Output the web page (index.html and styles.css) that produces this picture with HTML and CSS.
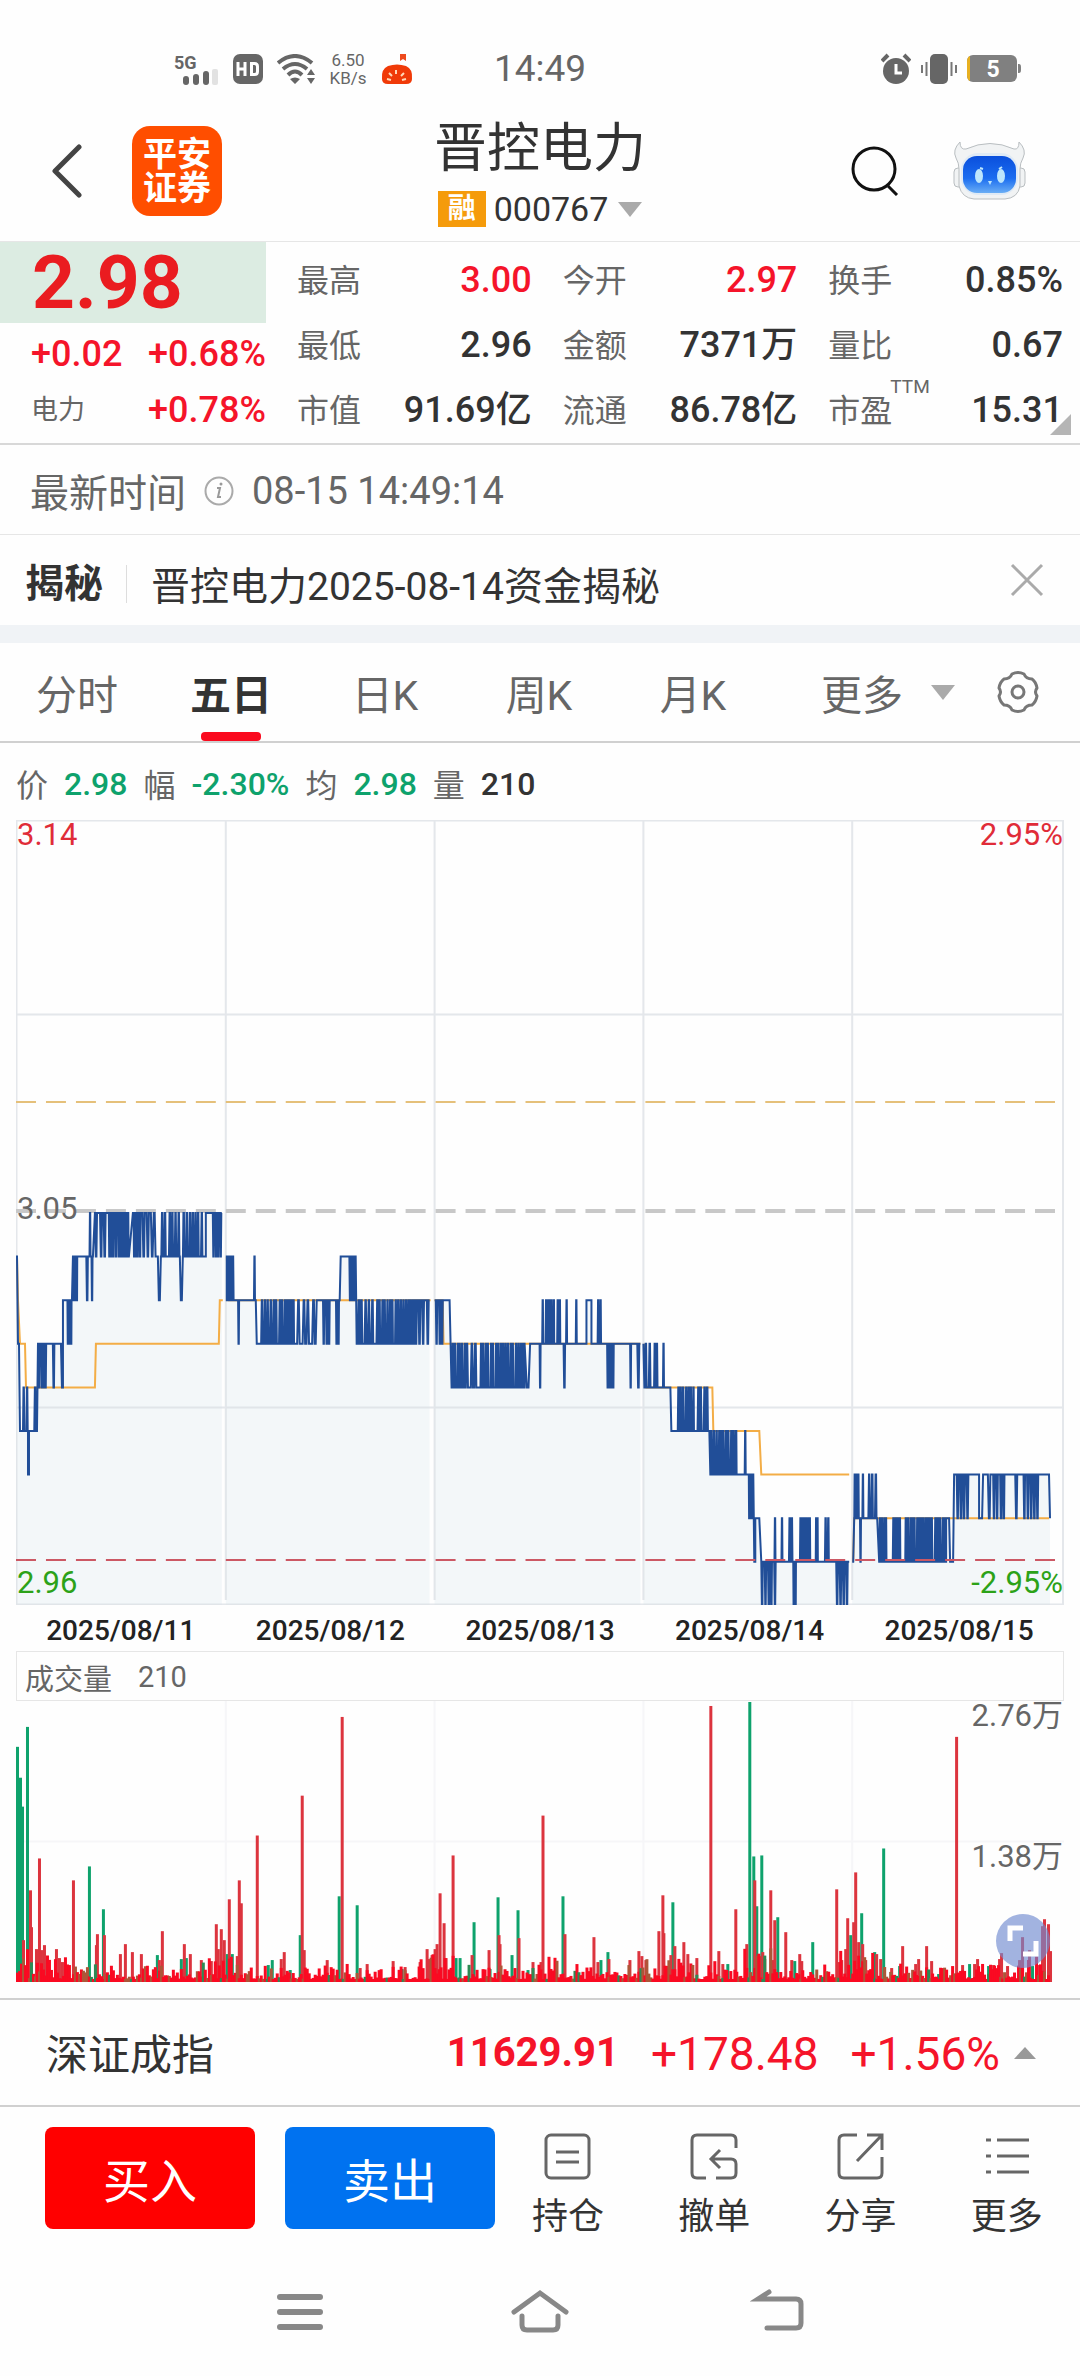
FILE: index.html
```html
<!DOCTYPE html>
<html lang="zh-CN">
<head>
<meta charset="utf-8">
<meta name="viewport" content="width=device-width, initial-scale=1">
<title>晋控电力 000767</title>
<link rel="stylesheet" href="styles.css">
</head>
<body>
<div class="status">
  <div class="status-left">
    <div class="signal"><span class="net">5G</span>
    <svg width="36" height="16" viewBox="0 0 36 16"><g fill="#666"><rect y="7" width="6" height="9" rx="3"/><rect x="10" y="5" width="6" height="11" rx="3"/><rect x="20" y="2" width="6" height="14" rx="3"/></g><rect x="29" width="6" height="16" rx="2" fill="#e2e2e2"/></svg></div>
    <svg width="30" height="30" viewBox="0 0 30 30"><rect width="30" height="30" rx="7" fill="#666"/><path d="M5 8v14M12 8v14M5 15h7M18.500 9.500h3q3 0 3 3v5q0 3-3 3h-3z" fill="none" stroke="#fff" stroke-width="3"/></svg>
    <svg width="38" height="30" viewBox="0 0 38 30"><g fill="none" stroke="#666" stroke-width="4"><path d="M1 9q17-14 34 0"/><path d="M6 15q12-10 24 0"/><path d="M11 21q7-7 14 0"/></g><path d="M13 25q5-3 10 0l-5 5zM30 21l4-6 4 6zM30 24h8l-4 6z" fill="#666"/></svg>
    <div class="speed"><span>6.50</span><span>KB/s</span></div>
    <svg width="32" height="30" viewBox="0 0 32 30"><path d="M19 0h6v7l-3-2-3 2z" fill="#ee4a1d"/><path d="M7 12q9-3 18 0 7 3 6 13 0 5-6 5H7q-6 0-6-5Q0 15 7 12z" fill="#f03a08"/><path d="M6 25l4 1M8 19l3 3M15 16v4M23 19l-3 3M25 25l-4 1" stroke="#ffd9b8" stroke-width="2"/></svg>
  </div>
  <time class="clock">14:49</time>
  <div class="status-right">
    <svg width="30" height="32" viewBox="0 0 30 32"><circle cx="15" cy="18" r="13" fill="#666"/><path d="M1 8l6-6M29 8l-6-6" stroke="#666" stroke-width="4"/><path d="M15 11v9h6" fill="none" stroke="#fff" stroke-width="3"/></svg>
    <svg width="36" height="30" viewBox="0 0 36 30"><rect x="9" width="18" height="30" rx="5" fill="#666"/><path d="M1 11v8M5.500 8v14M30.500 8v14M35 11v8" stroke="#777" stroke-width="2"/></svg>
    <svg width="54" height="28" viewBox="0 0 54 28"><rect width="50" height="27" rx="6" fill="#808080"/><path d="M3 1v25q-3-1-3-6V7q0-5 3-6z" fill="#e8b020"/><path d="M51 9h1q2 0 2 3v3q0 3-2 3h-1z" fill="#808080"/><text x="26" y="22" text-anchor="middle" class="battery">5</text></svg>
  </div>
</div>

<header class="header">
  <div class="header-left">
    <button class="icon-btn" aria-label="返回"><svg width="30" height="54" viewBox="0 0 30 54"><path d="M27 3L3 27l24 24" fill="none" stroke="#444" stroke-width="5" stroke-linecap="round" stroke-linejoin="round"/></svg></button>
    <div class="brand"><span>平安</span><span>证券</span></div>
  </div>
  <div class="title">
    <h1>晋控电力</h1>
    <div class="code"><span class="tag">融</span><span>000767</span><i class="caret-down"></i></div>
  </div>
  <div class="header-right">
    <button class="icon-btn" aria-label="搜索"><svg width="48" height="50" viewBox="0 0 48 50"><circle cx="23" cy="23" r="21" fill="none" stroke="#111" stroke-width="3"/><path d="M37 40l9 9" stroke="#111" stroke-width="3"/></svg></button>
    <button class="icon-btn" aria-label="智能助手"><svg width="74" height="60" viewBox="0 0 74 60"><defs><linearGradient id="face" x1="0" y1="0" x2="0" y2="1"><stop offset="0" stop-color="#0a4fdc"/><stop offset=".6" stop-color="#1a6cf0"/><stop offset="1" stop-color="#6aaef5"/></linearGradient></defs><g fill="#f1f3f4" stroke="#b9bec1"><rect x="1" y="27" width="9" height="19" rx="4"/><rect x="63" y="27" width="9" height="19" rx="4"/><path d="M7 1Q-1 9 3 17q3 5 3 11v17q3 12 15 13h31q13-1 15-13V28q0-6 3-11Q74 9 66 1q0 8-5 7Q37-3 13 8 7 9 7 1z"/></g><rect x="8" y="12" width="57" height="42" rx="17" fill="#dfeaf5"/><rect x="10" y="15" width="53" height="37" rx="14" fill="url(#face)"/><g fill="#bde6fc"><ellipse cx="26" cy="35" rx="4" ry="7"/><ellipse cx="48" cy="35" rx="4" ry="7"/><path d="M35 40h4l-2 4z"/></g><path d="M27 27l3 1M46 28l3-2" stroke="#bde6fc" stroke-width="2"/></svg></button>
  </div>
</header>

<section class="quote">
  <div class="last">
    <strong class="price">2.98</strong>
    <div class="change"><b>+0.02</b><b>+0.68%</b></div>
    <div class="change"><span>电力</span><b>+0.78%</b></div>
  </div>
  <dl class="stats">
    <div><dt>最高</dt><dd class="up">3.00</dd></div>
    <div><dt>今开</dt><dd class="up">2.97</dd></div>
    <div><dt>换手</dt><dd>0.85%</dd></div>
    <div><dt>最低</dt><dd>2.96</dd></div>
    <div><dt>金额</dt><dd>7371万</dd></div>
    <div><dt>量比</dt><dd>0.67</dd></div>
    <div><dt>市值</dt><dd>91.69亿</dd></div>
    <div><dt>流通</dt><dd>86.78亿</dd></div>
    <div><dt>市盈<span class="ttm">TTM</span></dt><dd>15.31</dd></div>
  </dl>
  <i class="corner"></i>
</section>

<div class="updated"><span class="updated-name">最新时间</span>
  <svg width="30" height="30" viewBox="0 0 30 30"><circle cx="15" cy="15" r="13.500" fill="none" stroke="#aaa" stroke-width="2"/><path d="M13 12h3l-2 9h3" fill="none" stroke="#999" stroke-width="2"/><circle cx="17" cy="8" r="1.500" fill="#999"/></svg>
  <time>08-15 14:49:14</time></div>

<div class="news"><b>揭秘</b><a href="#news">晋控电力2025-08-14资金揭秘</a>
  <button class="icon-btn" aria-label="关闭"><svg width="34" height="34" viewBox="0 0 34 34"><path d="M2 2l30 30M32 2L2 32" stroke="#aaa" stroke-width="3"/></svg></button></div>

<nav class="tabs">
  <div class="tab-list">
    <button class="tab">分时</button><button class="tab active">五日</button><button class="tab">日K</button><button class="tab">周K</button><button class="tab">月K</button>
  </div>
  <button class="tab more">更多<i class="caret-down"></i></button>
  <button class="icon-btn gear" aria-label="设置"><svg width="44" height="44" viewBox="0 0 44 44"><path d="M16 4q6-3 12 0 2 5 8 5 4 3 5 9-3 4 0 8-1 6-5 9-6 0-8 5-6 3-12 0-2-5-8-5-4-3-5-9 3-4 0-8 1-6 5-9 6 0 8-5z" fill="none" stroke="#777" stroke-width="3" stroke-linejoin="round"/><circle cx="22" cy="22" r="6" fill="none" stroke="#777" stroke-width="3"/></svg></button>
</nav>

<main class="charts">
  <div class="legend"><span>价</span><b>2.98</b><span>幅</span><b>-2.30%</b><span>均</span><b>2.98</b><span>量</span><b class="dark">210</b></div>
  <div class="plot price-plot">
    <svg viewBox="0 0 1049 785" preserveAspectRatio="none">
      <path id="area" fill="#f3f7f9"/>
      <path d="M.5 0V785M210 0V780M419 0V780M628 0V780M837 0V780M1048 0V785M0 .5H1049M0 194.500H1049M0 587.500H1049M0 784.500H1049" fill="none" stroke="#d9dde2" stroke-opacity=".7" stroke-width="2"/>
      <path d="M0 282H1040" stroke="#e5c07a" stroke-width="2" stroke-dasharray="20 10"/>
      <path d="M0 391H1040" stroke="#c8c8c8" stroke-width="4" stroke-dasharray="20 10"/>
      <path id="average" fill="none" stroke="#f3ad46" stroke-width="2"/>
      <path id="price" fill="none" stroke="#214e98" stroke-width="2"/>
      <path d="M0 740H1040" stroke="#cc5864" stroke-width="2" stroke-dasharray="20 10"/>
    </svg>
    <span class="label top left up">3.14</span><span class="label top right up">2.95%</span>
    <span class="label middle left">3.05</span>
    <span class="label bottom left down">2.96</span><span class="label bottom right down">-2.95%</span>
  </div>
  <div class="dates"><time>2025/08/11</time><time>2025/08/12</time><time>2025/08/13</time><time>2025/08/14</time><time>2025/08/15</time></div>
  <div class="volume-head"><span>成交量</span><span>210</span></div>
  <div class="plot volume-plot">
    <svg viewBox="0 0 1049 282" preserveAspectRatio="none">
      <path d="M210 0V282M419 0V282M628 0V282M837 0V282M0 141H1049" stroke="#f6f6f8" stroke-width="2"/>
      <g id="bars"></g>
    </svg>
    <span class="label top right">2.76万</span><span class="label middle right">1.38万</span>
    <button class="expand" aria-label="全屏"><svg width="32" height="32" viewBox="0 0 32 32"><path d="M3 16V3h13M29 16v13H16" fill="none" stroke="#fff" stroke-width="5"/></svg></button>
  </div>
</main>

<section class="index"><span class="index-name">深证成指</span><b class="index-last">11629.91</b><span class="index-num">+178.48</span><span class="index-num">+1.56%</span><i class="caret-up"></i></section>

<footer class="actions">
  <div class="trade"><button class="buy">买入</button><button class="sell">卖出</button></div>
  <div class="tools">
    <button><svg width="48" height="48" viewBox="0 0 48 48"><rect x="2" y="2" width="43" height="43" rx="5"/><path d="M12 19h23M12 29h23"/></svg>持仓</button>
    <button><svg width="48" height="48" viewBox="0 0 48 48"><path d="M16 45H7q-5 0-5-5V7q0-5 5-5h34q5 0 5 5v8M30 17l-9 9 9 9M21 26h20q5 0 5 5v9q0 5-5 5H26"/></svg>撤单</button>
    <button><svg width="48" height="48" viewBox="0 0 48 48"><path d="M20 2H7Q2 2 2 7v33q0 5 5 5h33q5 0 5-5V24M30 2h15v15M45 2L20 28"/></svg>分享</button>
    <button><svg width="48" height="48" viewBox="0 0 48 48"><path d="M3 7h5M14 7h32M3 23h5M14 23h32M3 39h5M14 39h32"/></svg>更多</button>
  </div>
</footer>
<nav class="system">
  <button class="icon-btn" aria-label="任务"><svg width="60" height="46" viewBox="0 0 60 46"><path d="M10 8h40M10 23h40M10 38h40" stroke-width="6"/></svg></button>
  <button class="icon-btn" aria-label="主页"><svg width="60" height="46" viewBox="0 0 60 46"><path d="M4 23L30 4l26 19M12 27v9q0 5 5 5h26q5 0 5-5v-9" stroke-width="5"/></svg></button>
  <button class="icon-btn" aria-label="后退"><svg width="60" height="46" viewBox="0 0 60 46"><path d="M19 3l-11 7h38q5 0 5 5v19q0 5-5 5H17" stroke-width="5"/></svg></button>
</nav>
<script src="chart.js"></script>
</body>
</html>
```
FILE: styles.css
```css
* { box-sizing: border-box; margin: 0; padding: 0; }
body { background: #fefefe; color: #333; font-family: Roboto, "Noto Sans CJK SC", sans-serif; font-size: 32px; }
svg { display: block; flex: none; }
button { border: 0; background: none; font: inherit; color: inherit; cursor: pointer; }
a { color: inherit; text-decoration: none; }
b { font-weight: 500; }
.icon-btn { display: flex; align-items: center; justify-content: center; }
.caret-down { border: 12px solid transparent; border-top: 15px solid #aaa; border-bottom: 0; }
.caret-up { border: 11px solid transparent; border-bottom: 12px solid #999; border-top: 0; }
.up { color: #f5142a; }

.status { display: grid; grid-template-columns: 1fr auto 1fr; align-items: center; height: 110px; padding-top: 27px; color: #666; }
.status-left { display: flex; align-items: center; gap: 14px; padding-left: 174px; }
.status-right { display: flex; align-items: center; justify-content: flex-end; gap: 10px; padding-right: 59px; }
.signal { display: flex; flex-direction: column; width: 45px; }
.signal svg { align-self: flex-end; margin-top: -4px; }
.speed { display: flex; flex-direction: column; align-items: center; width: 38px; font-size: 17px; line-height: 18px; }
.net { font-size: 18px; line-height: 20px; font-weight: 700; }
.battery { font-size: 23px; font-weight: 700; fill: #fff; }
.clock { font-size: 37px; line-height: 40px; }

.header { display: grid; grid-template-columns: 1fr auto 1fr; align-items: start; height: 132px; border-bottom: 1px solid #e6e6e6; }
.header-left { display: flex; align-items: center; gap: 50px; padding-left: 52px; height: 122px; }
.brand { display: flex; flex-direction: column; align-items: center; justify-content: center; width: 90px; height: 90px; border-radius: 18px; background: #ff4e00; color: #fff; font-size: 34px; font-weight: 700; line-height: 34px; }
.title { display: flex; flex-direction: column; align-items: center; gap: 5px; padding-top: 4px; }
.title h1 { font-size: 53px; font-weight: 400; line-height: 70px; }
.code { display: flex; align-items: center; gap: 8px; font-size: 34px; line-height: 40px; }
.code .caret-down { margin-left: 2px; }
.tag { width: 48px; height: 36px; background: #f59b0b; color: #fff; font-size: 28px; font-weight: 700; line-height: 36px; text-align: center; }
.header-right { display: flex; align-items: center; justify-content: flex-end; gap: 54px; padding-right: 53px; height: 122px; }

.quote { position: relative; display: grid; grid-template-columns: 266px 1fr; gap: 31px; height: 203px; padding-right: 17px; border-bottom: 2px solid #d8d8d8; }
.last { display: grid; grid-template-rows: 81px 62px 50px; }
.price { padding-left: 32px; background: #dcece2; color: #ea1c20; font-size: 75px; line-height: 81px; font-weight: 700; }
.change { display: flex; align-items: center; justify-content: space-between; padding-left: 31px; font-size: 36px; line-height: 40px; color: #f5142a; }
.change span { color: #666; font-size: 27px; }
.stats { display: grid; grid-template-columns: repeat(3, 1fr); grid-auto-rows: 65px; column-gap: 31px; padding-top: 5px; }
.stats div { display: flex; align-items: center; justify-content: space-between; }
.stats dt { position: relative; padding-bottom: 4px; color: #666; font-size: 32px; }
.stats dd { font-size: 36px; font-weight: 500; line-height: 40px; }
.ttm { position: absolute; left: 62px; top: -8px; font-size: 19px; line-height: 20px; }
.corner { position: absolute; right: 9px; bottom: 8px; border-left: 21px solid transparent; border-bottom: 21px solid #b5b5b5; }

.updated { display: flex; align-items: center; gap: 18px; height: 90px; padding: 2px 30px 0; border-bottom: 1px solid #e6e6e6; color: #666; font-size: 38px; }
.updated-name { font-size: 39px; padding-bottom: 2px; }
.news { display: flex; align-items: center; height: 90px; padding: 0 36px 0 25px; font-size: 39px; }
.news b { margin-top: 8px; font-weight: 700; padding-right: 23px; line-height: 38px; border-right: 1px solid #ddd; }
.news a { flex: 1; padding: 6px 0 0 24px; }

.tabs { display: grid; grid-template-columns: 770fr 200fr 110fr; align-items: center; height: 118px; border-top: 18px solid #f0f3f6; border-bottom: 2px solid #d0d0d0; }
.tab-list { display: grid; grid-template-columns: repeat(5, 1fr); }
.tab { position: relative; display: flex; align-items: center; justify-content: center; height: 98px; color: #666; font-size: 41px; }
.tab.active { color: #333; font-weight: 700; }
.tab.active::after { content: ""; position: absolute; bottom: 0; width: 60px; height: 9px; border-radius: 4px; background: #fa0a1e; }
.tab.more { gap: 28px; padding-left: 36px; }
.gear { padding-right: 14px; }

.charts { padding: 0 16px; }
.legend { display: flex; align-items: center; gap: 16px; height: 77px; padding-top: 4px; color: #666; }
.legend span { padding-bottom: 2px; }
.legend b { color: #0ea26c; }
.legend .dark { color: #333; }
.plot { position: relative; }
.plot > svg { width: 100%; }
.price-plot > svg { height: 785px; }
.volume-plot { border-top: 1px solid #e6e6e6; }
.volume-plot > svg { height: 281px; }
.label { position: absolute; font-size: 31px; line-height: 30px; color: #666; }
.left { left: 1px; }
.right { right: 1px; }
.top { top: 0; }
.middle { top: 50%; }
.bottom { bottom: 7px; }
.price-plot .middle { top: 374px; }
.label.up { color: #e02c38; }
.label.down { color: #2ca218; }
.dates { display: grid; grid-template-columns: repeat(5, 1fr); height: 46px; align-items: center; text-align: center; color: #222; font-size: 28px; font-weight: 500; padding-top: 4px; }
.volume-head { display: flex; align-items: center; gap: 26px; height: 49px; padding: 2px 8px 0; border: 1px solid #e6e6e6; border-bottom: 0; color: #666; font-size: 29px; }
.expand { position: absolute; right: 14px; bottom: 14px; display: flex; align-items: center; justify-content: center; width: 54px; height: 54px; border-radius: 50%; background: rgba(112, 138, 208, .65); }

.index { display: flex; align-items: center; height: 109px; margin-top: 16px; padding: 0 44px 0 46px; border-top: 2px solid #d0d0d0; border-bottom: 2px solid #d0d0d0; }
.index-name { flex: 1; padding-bottom: 3px; font-size: 42px; }
.index-last { color: #f5142a; font-size: 40px; font-weight: 700; }
.index-num { padding: 2px 0 0 32px; color: #f5142a; font-size: 46px; }
.index .caret-up { margin-left: 14px; }

.actions { display: grid; grid-template-columns: 495fr 585fr; height: 142px; padding-top: 20px; }
.trade { display: grid; grid-template-columns: 1fr 1fr; gap: 30px; padding-left: 45px; }
.trade button { height: 102px; padding-top: 8px; border-radius: 8px; color: #fff; font-size: 47px; line-height: 60px; }
.buy { background: #ff0000; }
.sell { background: #0072f0; }
.tools { display: grid; grid-template-columns: repeat(4, 1fr); }
.tools button { display: flex; flex-direction: column; align-items: center; gap: 14px; padding-top: 6px; height: 114px; font-size: 36px; line-height: 44px; }
.tools svg { fill: none; stroke: #666; stroke-width: 3; }
.system { display: grid; grid-template-columns: repeat(3, 1fr); padding: 40px 16.667% 40px; }
.system svg { fill: none; stroke: #888; stroke-linecap: round; }
```
FILE: chart.js
```js
// Fixed-seed generator keeps the small ticks identical on every load.
let seed = 7;
const rand = () => (seed = (seed * 16807) % 2147483647) / 2147483647;
const y = level => Math.min(785, 393 + level * 43.6);

// Each run: [from, to, base level, touched level, number of touches]
const days = [
  [[0,1,1],[2,3,3],[4,7,5],[7,12,5,4,2],[12,13,6],[13,18,5],[18,21,5,4,1],[22,31,3,4,4],[32,36,3],[36,39,3,4,1],[40,45,3],[46,47,4],[47,50,2],[51,56,2,3,3],[57,62,1,2,3],[62,70,1],[70,73,1,2,1],[73,75,1,0,1],[75,77,1,2,1],[79,91,0,1,3],[92,106,0,1,6],[107,113,1,0,3],[117,125,0,1,4],[126,135,0,1,2],[136,142,1,0,1],[143,144,2],[145,151,1,0,2],[152,164,1,0,4],[165,166,2],[167,187,1,0,7],[187,190,1],[190,197,0],[197,206,0,1,4]],
  [[210,211,1],[211,219,2,1,3],[219,222,2],[222,224,2,3,1],[224,238,2],[238,240,2,1,1],[241,245,3],[245,268,3,2,8],[268,279,3,2,5],[280,300,3,2,4],[301,307,2],[307,315,2,3,3],[315,320,2],[320,324,2,3,2],[325,333,1],[333,340,1,2,3],[341,363,3,2,6],[363,399,3,2,14],[399,414,2,3,4]],
  [[419,420,2],[420,428,2,3,3],[428,434,2],[436,450,4,3,6],[450,463,4,3,3],[464,509,4,3,18],[509,520,3,4,1],[520,524,3],[524,526,3,4,1],[526,528,3,2,1],[530,539,3,2,5],[541,545,3,2,2],[547,550,3,4,1],[550,552,3,2,1],[552,560,3],[560,562,3,2,1],[562,571,3],[571,576,2],[576,582,3],[582,586,3,2,2],[587,591,3],[591,599,3,4,4],[599,614,3],[614,616,3,4,1],[616,621,3],[621,625,3,4,1]],
  [[628,628,3],[629,636,4,3,2],[638,643,4,3,2],[647,649,4,3,1],[650,655,4],[656,662,5],[662,679,5,4,7],[681,694,5,4,4],[695,722,6,5,11],[723,729,6],[729,731,6,5,1],[733,738,6,7,3],[739,740,8],[740,744,7],[746,761,8,9,5],[759,761,8,7,1],[766,768,8,7,1],[773,778,8,7,2],[778,781,8,9,2],[784,796,8,7,6],[800,803,8,7,2],[809,814,8,7,2],[814,821,8],[821,834,8,9,4]],
  [[837,838,8],[839,844,7,6,3],[844,846,7,8,1],[847,849,7,6,1],[853,862,7,6,3],[864,872,8,7,4],[873,877,8],[877,886,8,7,4],[886,890,8],[890,918,8,7,13],[919,931,8,7,5],[931,934,7],[935,938,8],[939,940,6],[941,955,6,7,4],[955,964,6],[964,967,7],[968,971,6],[972,977,6,7,1],[978,990,6,7,4],[999,1003,6,7,1],[1008,1014,6,7,2],[1014,1024,6,7,3],[1024,1034,6],[1035,1035,7]]
];
let line = "", area = "";
for (const runs of days) {
  const pts = [];
  for (const [from, to, base, touched, count = 0] of runs) {
    pts.push([from, y(base)]);
    const step = (to - from) / Math.max(count, 1);
    for (let i = 0; i < count; i++) {
      const x = from + step * i + rand() * step * 0.4;
      pts.push([x, y(base)], [x + step * 0.2, y(touched)], [x + step * 0.35, y(touched)], [x + step * 0.5, y(base)]);
    }
    pts.push([to, y(base)]);
  }
  const d = pts.map(p => p[0].toFixed(1) + " " + p[1].toFixed(1)).join("L");
  line += "M" + d;
  area += "M" + pts[0][0] + " 785L" + d + "V785Z";
}
document.getElementById("price").setAttribute("d", line);
document.getElementById("area").setAttribute("d", area);

const averages = [
  [[1,1],[2,2],[4,3],[9,3],[10,4],[79,4],[80,3],[203,3],[204,2],[207,2]],
  [[211,1],[213,2],[415,2]],
  [[419,2],[427,2],[428,3],[625,3]],
  [[629,3],[631,4],[697,4],[698,5],[744,5],[746,6],[834,6]],
  [[838,8],[839,7],[1034,7]]
];
document.getElementById("average").setAttribute("d",
  averages.map(day => "M" + day.map(([x, l]) => x + " " + y(l)).join("L")).join(""));

// Traded volume: x position and bar height
const green = [0,236,3,205,5,176,10,256,72,116,86,73,140,27,164,23,169,24,210,28,215,28,251,17,255,22,273,12,283,47,322,86,340,77,385,13,439,24,443,24,457,60,473,13,481,85,495,27,501,72,511,12,546,86,584,22,591,30,656,80,711,18,733,281,737,126,740,76,745,127,761,65,778,21,796,40,834,47,845,69,858,30,867,134,883,16,904,11,922,8,953,18,972,16,1016,16];
const red = [6,42,13,92,14,55,19,33,22,124,24,32,27,37,39,33,42,24,45,20,56,102,79,37,80,48,87,47,103,28,108,38,115,30,124,28,142,22,145,51,167,38,173,28,184,22,194,21,199,58,201,33,204,53,207,42,212,83,220,26,222,102,224,79,240,147,264,23,267,30,285,187,287,32,310,22,325,266,343,14,350,18,376,21,388,15,403,20,410,33,412,23,415,27,418,33,420,38,423,89,427,59,429,24,436,127,455,27,472,32,482,47,483,38,502,44,516,20,524,20,526,167,548,48,577,45,581,20,592,23,613,22,622,31,625,26,629,22,642,51,646,87,647,49,654,27,658,36,667,40,671,28,680,24,694,277,702,31,706,18,719,73,730,38,738,102,741,24,743,26,746,30,748,23,754,92,756,22,758,62,769,50,775,22,783,28,785,21,820,93,822,20,825,22,829,33,831,64,837,60,839,110,842,40,846,38,849,22,860,28,864,23,875,14,886,36,899,18,902,23,910,36,915,21,940,246,946,17,958,18,961,23,977,17,983,23,985,29,991,16,1003,22,1006,45,1013,32,1022,17,1026,56,1028,63,1032,58,1034,31];
const bars = [];
const add = (x, h, color, w = 3) => bars.push(`<rect x="${x}" y="${282 - h}" width="${w}" height="${h}" fill="${color}"/>`);
for (let i = 0; i < green.length; i += 2) add(green[i], green[i + 1], "#0ea26c");
for (let i = 0; i < red.length; i += 2) add(red[i], red[i + 1], "#dc343e");
for (let x = 0; x < 1034; x += 2) {
  const busy = [5, 40, 205, 425, 530, 645, 745, 835, 1015].some(c => Math.abs(c - x) < 22);
  const h = 3 + rand() * rand() * (busy ? 32 : 18);
  const c = rand();
  add(x, h.toFixed(1), c < 0.76 ? "#fa0a22" : c < 0.92 ? "#ad5638" : "#2d8a54");
}
document.getElementById("bars").innerHTML = bars.join("");
```
